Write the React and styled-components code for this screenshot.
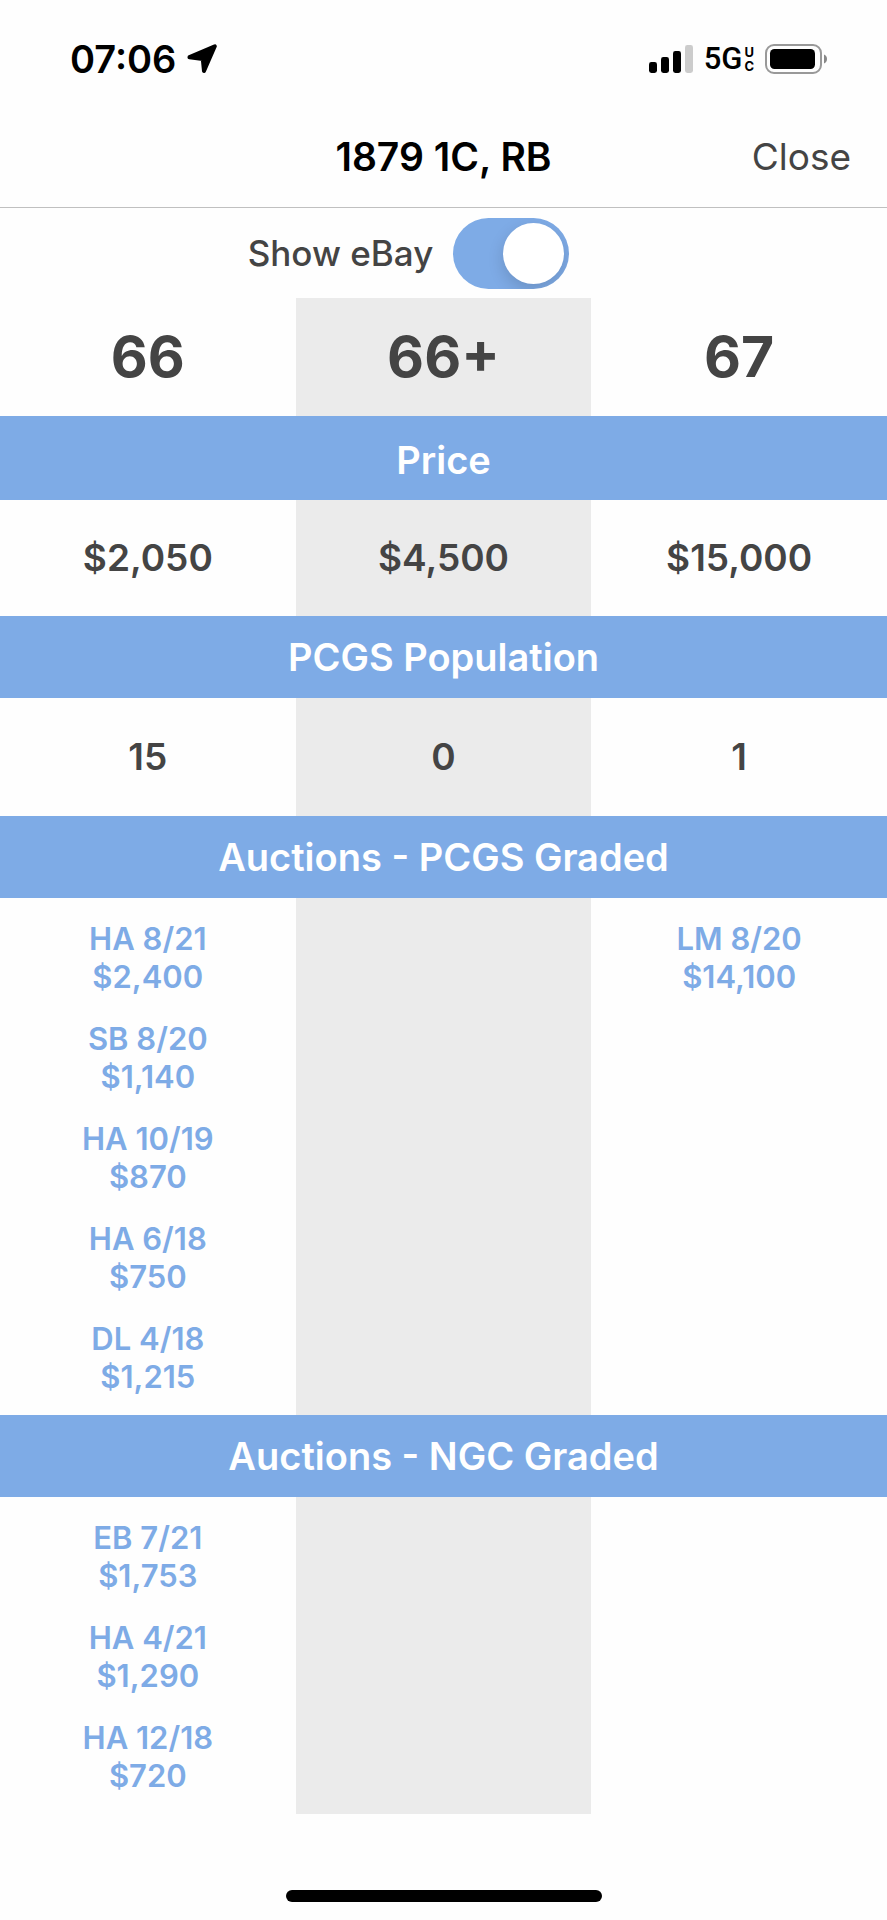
import React, { useState } from "react";
import styled, { createGlobalStyle, ThemeProvider } from "styled-components";

const theme = {
  blue: "#7eabe6",
  ink: "#444444",
  shade: "#ebebeb",
  line: "#c0c0c0",
  page: "#fefefe",
};

const GlobalStyle = createGlobalStyle`
  *, *::before, *::after { box-sizing: border-box; }
  body {
    margin: 0;
    background: ${theme.page};
    color: ${theme.ink};
    font-family: Inter, Roboto, "Liberation Sans", sans-serif;
  }
`;

const Screen = styled.div`
  display: flex;
  flex-direction: column;
  min-height: 100vh;
`;

const StatusBar = styled.div`
  display: flex;
  align-items: center;
  justify-content: space-between;
  height: 108px;
  padding: 10px 60px 0 70px;
  color: #000;
`;

const StatusGroup = styled.div`
  display: flex;
  align-items: center;
  gap: ${(p) => p.$gap}px;
`;

const Clock = styled.time`
  font-size: 38px;
  font-weight: 600;
  line-height: 48px;
`;

const Network = styled.div`
  display: flex;
  align-items: center;
  gap: 2px;
  font-family: Roboto, "Liberation Sans", sans-serif;
  font-size: 31px;
  font-weight: 500;
  line-height: 32px;
`;

const NetworkSuffix = styled.span`
  display: grid;
  font-family: Inter, sans-serif;
  font-size: 13px;
  font-weight: 700;
  line-height: 14px;
`;

const TitleBar = styled.header`
  display: grid;
  grid-template-columns: 1fr auto 1fr;
  align-items: center;
  height: 100px;
  padding: 0 36px 2px;
  border-bottom: 1px solid ${(p) => p.theme.line};
`;

const Title = styled.h1`
  grid-column: 2;
  margin: 0;
  color: #000;
  font-size: 39px;
  font-weight: 600;
  line-height: 48px;
`;

const CloseButton = styled.button`
  justify-self: end;
  padding: 0;
  border: 0;
  background: none;
  color: inherit;
  font: inherit;
  font-size: 37px;
  line-height: 48px;
  cursor: pointer;
`;

const ToggleRow = styled.label`
  display: flex;
  align-items: center;
  justify-content: center;
  gap: 20px;
  height: 90px;
  padding-right: 70px;
  font-size: 35px;
  font-weight: 500;
  line-height: 48px;
`;

const Switch = styled.input.attrs({ type: "checkbox", role: "switch" })`
  appearance: none;
  display: flex;
  flex: none;
  width: 116px;
  height: 71px;
  margin: 0;
  padding: 5px;
  border-radius: 36px;
  background: #d8d8d8;
  overflow: hidden;
  cursor: pointer;

  &::before {
    content: "";
    width: 61px;
    height: 61px;
    border-radius: 50%;
    background: #fff;
    box-shadow: 0 6px 16px rgba(0, 0, 0, 0.15);
  }

  &:checked {
    justify-content: flex-end;
    background: ${(p) => p.theme.blue};
  }
`;

const GradeTable = styled.table`
  width: 100%;
  table-layout: fixed;
  border-collapse: collapse;
  text-align: center;
`;

const GradeHead = styled.th`
  height: 118px;
  padding: 0;
  font-size: 57px;
  font-weight: 700;
  line-height: 64px;
  background: ${(p) => (p.$shaded ? p.theme.shade : "transparent")};
`;

const Band = styled.th`
  height: ${(p) => (p.$tall ? 84 : 82)}px;
  padding: ${(p) => (p.$tall ? 4 : 0)}px 0 0;
  background: ${(p) => p.theme.blue};
  color: #fff;
  font-size: 38px;
  font-weight: 600;
  line-height: 48px;
`;

const ValueCell = styled.td`
  height: ${(p) => (p.$short ? 116 : 118)}px;
  padding: 0;
  font-size: 37px;
  font-weight: 600;
  line-height: 48px;
  background: ${(p) => (p.$shaded ? p.theme.shade : "transparent")};
`;

const SalesCell = styled.td`
  padding: 22px 0 19px;
  vertical-align: top;
  background: ${(p) => (p.$shaded ? p.theme.shade : "transparent")};
`;

const SalesList = styled.ul`
  display: flex;
  flex-direction: column;
  align-items: center;
  gap: 24px;
  margin: 0;
  padding: 0;
  list-style: none;
`;

const SaleLink = styled.a`
  display: grid;
  color: ${(p) => p.theme.blue};
  font-size: 31px;
  font-weight: 600;
  line-height: 38px;
  text-decoration: none;
`;

const HomeIndicator = styled.div`
  width: 316px;
  max-width: 60%;
  height: 12px;
  margin: auto auto 18px;
  border-radius: 6px;
  background: #000;
`;

const LocationArrow = () => (
  <svg width="30" height="30" viewBox="0 0 30 30" aria-hidden="true">
    <path
      d="M27.800 2.300 L17 27 L15.800 15 L2.500 13.200 Z"
      fill="#000"
      stroke="#000"
      strokeWidth="4"
      strokeLinejoin="round"
    />
  </svg>
);

const SignalBars = () => (
  <svg width="44" height="28" viewBox="0 0 44 28" aria-hidden="true">
    <rect x="0" y="17" width="8" height="11" rx="2.4" />
    <rect x="12" y="12" width="8" height="16" rx="2.4" />
    <rect x="24" y="6" width="8" height="22" rx="2.4" />
    <rect x="36" y="0" width="8" height="28" rx="2.4" fill="#ccc" />
  </svg>
);

const Battery = () => (
  <svg width="62" height="30" viewBox="0 0 62 30" aria-hidden="true">
    <rect x="1" y="1" width="55" height="28" rx="8" fill="none" stroke="#999" strokeWidth="2" />
    <rect x="5" y="5" width="45" height="20" rx="4.5" />
    <path d="M59 10.500c4 1.500 4 7.500 0 9z" fill="#888" />
  </svg>
);

const pcgsSales = [
  [
    ["HA 8/21", "$2,400"],
    ["SB 8/20", "$1,140"],
    ["HA 10/19", "$870"],
    ["HA 6/18", "$750"],
    ["DL 4/18", "$1,215"],
  ],
  [],
  [["LM 8/20", "$14,100"]],
];

const ngcSales = [
  [
    ["EB 7/21", "$1,753"],
    ["HA 4/21", "$1,290"],
    ["HA 12/18", "$720"],
  ],
  [],
  [],
];

const BandRow = ({ children, tall }) => (
  <tr>
    <Band colSpan={3} scope="colgroup" $tall={tall}>
      {children}
    </Band>
  </tr>
);

const ValueRow = ({ values, short }) => (
  <tr>
    {values.map((value, i) => (
      <ValueCell key={i} $shaded={i === 1} $short={short}>
        {value}
      </ValueCell>
    ))}
  </tr>
);

const SalesRow = ({ columns }) => (
  <tr>
    {columns.map((sales, i) => (
      <SalesCell key={i} $shaded={i === 1}>
        {sales.length > 0 && (
          <SalesList>
            {sales.map(([lot, price]) => (
              <li key={lot}>
                <SaleLink href="#sale">
                  <span>{lot}</span>
                  <span>{price}</span>
                </SaleLink>
              </li>
            ))}
          </SalesList>
        )}
      </SalesCell>
    ))}
  </tr>
);

export default function App() {
  const [showEbay, setShowEbay] = useState(true);

  return (
    <ThemeProvider theme={theme}>
      <GlobalStyle />
      <Screen>
        <StatusBar>
          <StatusGroup $gap={11}>
            <Clock>07:06</Clock>
            <LocationArrow />
          </StatusGroup>
          <StatusGroup $gap={11}>
            <SignalBars />
            <Network>
              5G
              <NetworkSuffix>
                <span>U</span>
                <span>C</span>
              </NetworkSuffix>
            </Network>
            <Battery />
          </StatusGroup>
        </StatusBar>
        <TitleBar>
          <Title>1879 1C, RB</Title>
          <CloseButton type="button">Close</CloseButton>
        </TitleBar>
        <main>
          <ToggleRow>
            Show eBay
            <Switch checked={showEbay} onChange={(e) => setShowEbay(e.target.checked)} />
          </ToggleRow>
          <GradeTable>
            <thead>
              <tr>
                {["66", "66+", "67"].map((grade, i) => (
                  <GradeHead key={grade} scope="col" $shaded={i === 1}>
                    {grade}
                  </GradeHead>
                ))}
              </tr>
            </thead>
            <tbody>
              <BandRow tall>Price</BandRow>
              <ValueRow values={["$2,050", "$4,500", "$15,000"]} short />
              <BandRow>PCGS Population</BandRow>
              <ValueRow values={["15", "0", "1"]} />
              <BandRow>Auctions - PCGS Graded</BandRow>
              <SalesRow columns={pcgsSales} />
              <BandRow>Auctions - NGC Graded</BandRow>
              <SalesRow columns={ngcSales} />
            </tbody>
          </GradeTable>
        </main>
        <HomeIndicator />
      </Screen>
    </ThemeProvider>
  );
}
